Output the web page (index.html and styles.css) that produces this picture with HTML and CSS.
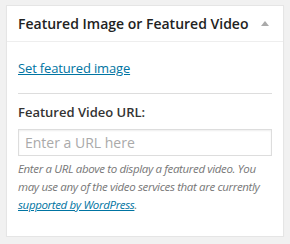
FILE: index.html
```html
<!DOCTYPE html>
<html lang="en">
<head>
    <meta charset="UTF-8">
    <title>Featured Image or Featured Video</title>
    <link rel="stylesheet" href="styles.css">
</head>
<body>
    <div class="postbox">
        <div class="postbox_head">
            <h3 class="postbox_title">Featured Image or Featured Video</h3>
            <span class="toggle_arrow"></span>
        </div>
        <div class="postbox_inside">
            <p class="set_image"><a href="#">Set featured image</a></p>
            <hr class="divider">
            <label for="video_url" class="video_label">Featured Video URL:</label>
            <input id="video_url" class="video_input" type="text" placeholder="Enter a URL here">
            <p class="description">
                Enter a URL above to display a featured video. You may use any of the video services that are currently <a href="#">supported by WordPress</a>.
            </p>
        </div>
    </div>
</body>
</html>
```

FILE: styles.css
```css
body{
    margin: 0;
    background: #f1f1f1;
    font-family: "Open Sans", "DejaVu Sans", sans-serif;
    color: #444;
}
.postbox{
    margin: 5px 6px 0 6px;
    width: 276px;
    height: 230px;
    background: #fff;
    border: 1px solid #e5e5e5;
    box-shadow: 0 1px 1px rgba(0,0,0,0.04);
}
.postbox_head{
    display: flex;
    align-items: center;
    justify-content: space-between;
    height: 35px;
    padding: 0 14px 0 11px;
    border-bottom: 1px solid #eee;
}
.postbox_title{
    margin: 0;
    font-size: 14px;
    font-weight: 600;
    color: #222;
}
.toggle_arrow{
    width: 0;
    height: 0;
    border-left: 4px solid transparent;
    border-right: 4px solid transparent;
    border-bottom: 5px solid #aaa;
}
.postbox_inside{
    padding: 0 11px;
}
.set_image{
    margin: 0;
    padding-top: 17px;
    font-size: 13px;
    line-height: 18px;
    letter-spacing: -0.15px;
}
a{
    color: #0074a2;
}
.divider{
    margin: 16px 0 0 0;
    border: none;
    border-top: 1px solid #ddd;
}
.video_label{
    display: block;
    margin-top: 9px;
    font-size: 13px;
    font-weight: 600;
    line-height: 18px;
    color: #333;
}
.video_input{
    display: block;
    box-sizing: border-box;
    width: 100%;
    height: 27px;
    margin-top: 8px;
    padding: 0 6px;
    border: 1px solid #ddd;
    box-shadow: inset 0 1px 2px rgba(0,0,0,0.07);
    font-family: "Open Sans", "DejaVu Sans", sans-serif;
    font-size: 14px;
    outline: none;
}
.video_input::placeholder{
    color: #aaa;
}
.description{
    margin: 4px 0 0 0;
    font-size: 11.5px;
    font-style: italic;
    line-height: 18px;
    letter-spacing: -0.35px;
    color: #777;
}
```
